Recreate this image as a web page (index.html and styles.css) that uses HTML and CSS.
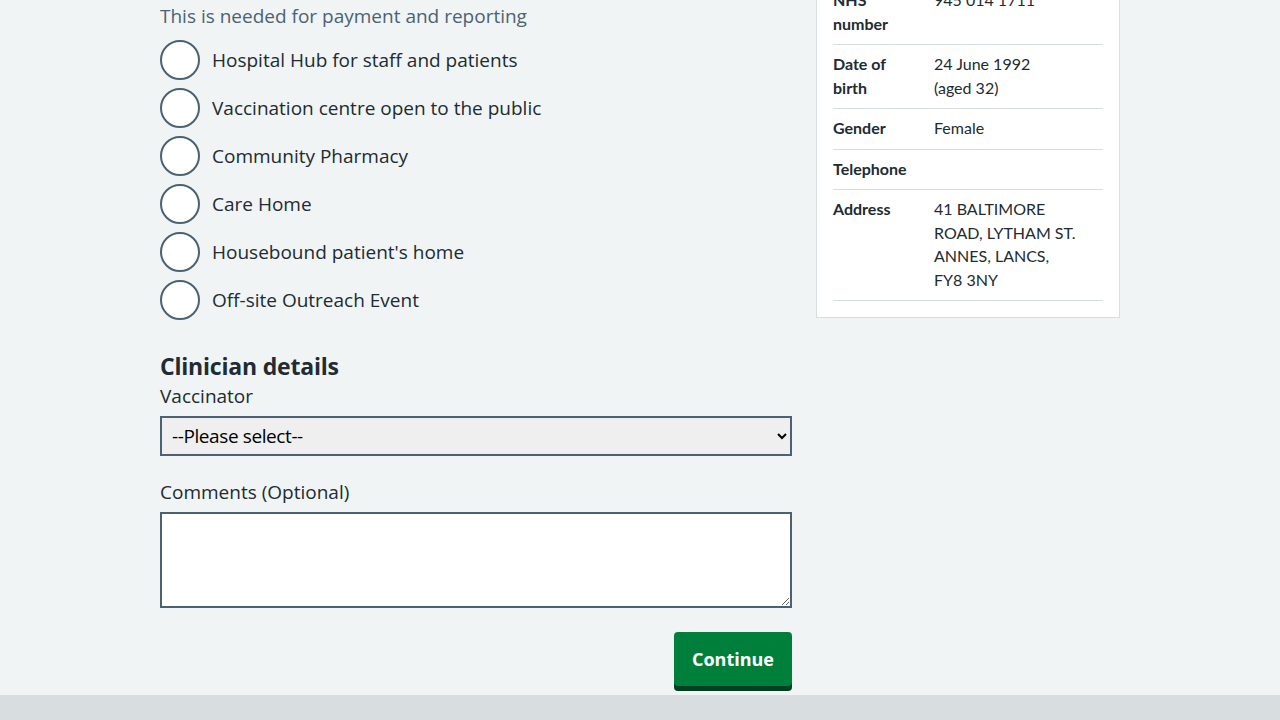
FILE: index.html
```html
<!DOCTYPE html>
<html lang="en">
<head>
<meta charset="utf-8">
<title>Record vaccination</title>
<link rel="stylesheet" href="styles.css">
</head>
<body>
<main class="container">
  <div class="layout">
    <div class="main-col">
      <p class="hint">This is needed for payment and reporting</p>
      <div class="radios">
        <label class="radio"><input type="radio" name="site"><span class="circle"></span><span class="radio-label">Hospital Hub for staff and patients</span></label>
        <label class="radio"><input type="radio" name="site"><span class="circle"></span><span class="radio-label">Vaccination centre open to the public</span></label>
        <label class="radio"><input type="radio" name="site"><span class="circle"></span><span class="radio-label">Community Pharmacy</span></label>
        <label class="radio"><input type="radio" name="site"><span class="circle"></span><span class="radio-label">Care Home</span></label>
        <label class="radio"><input type="radio" name="site"><span class="circle"></span><span class="radio-label">Housebound patient's home</span></label>
        <label class="radio"><input type="radio" name="site"><span class="circle"></span><span class="radio-label">Off-site Outreach Event</span></label>
      </div>

      <h2 class="heading">Clinician details</h2>
      <label class="field-label" for="vaccinator">Vaccinator</label>
      <select id="vaccinator" class="select">
        <option>--Please select--</option>
      </select>

      <label class="field-label comments-label" for="comments">Comments (Optional)</label>
      <textarea id="comments" class="textarea"></textarea>

      <div class="actions">
        <button class="button" type="button">Continue</button>
      </div>
    </div>

    <aside class="card">
      <dl class="summary">
        <div class="row"><dt>NHS number</dt><dd>945 014 1711</dd></div>
        <div class="row"><dt>Date of birth</dt><dd>24 June 1992<br>(aged 32)</dd></div>
        <div class="row"><dt>Gender</dt><dd>Female</dd></div>
        <div class="row"><dt>Telephone</dt><dd></dd></div>
        <div class="row"><dt>Address</dt><dd>41 BALTIMORE<br>ROAD, LYTHAM ST.<br>ANNES, LANCS,<br>FY8 3NY</dd></div>
      </dl>
    </aside>
  </div>
</main>
<footer class="footer"></footer>
</body>
</html>
```

FILE: styles.css
```css
* { box-sizing: border-box; }

html, body {
  margin: 0;
  padding: 0;
}

body {
  background: #f0f4f5;
  color: #212b32;
  font-family: "Open Sans", "Noto Sans", "Liberation Sans", sans-serif;
  font-size: 19px;
  line-height: 28px;
}

.container {
  width: 960px;
  margin: 0 auto;
  padding-bottom: 9px;
}

.layout {
  display: grid;
  grid-template-columns: 632px 304px;
  column-gap: 24px;
  align-items: start;
}

.main-col {
  display: flex;
  flex-direction: column;
}

.hint {
  margin: 2px 0 10px;
  color: #4c6272;
}

.radios {
  display: flex;
  flex-direction: column;
  gap: 8px;
}

.radio {
  display: flex;
  align-items: center;
  gap: 12px;
  cursor: pointer;
}

.radio input {
  display: none;
}

.circle {
  width: 40px;
  height: 40px;
  border: 2px solid #4c6272;
  border-radius: 50%;
  background: #fff;
  flex: none;
}

.heading {
  margin: 30px 0 0;
  font-size: 23px;
  line-height: 32px;
  font-weight: 700;
  letter-spacing: -0.2px;
}

.field-label {
  display: block;
  margin-bottom: 6px;
}

.comments-label {
  margin-top: 22px;
}

.select {
  width: 632px;
  height: 40px;
  border: 2px solid #4c6272;
  border-radius: 0;
  background: #efefef;
  color: #000;
  font-family: "Open Sans", "Noto Sans", sans-serif;
  font-size: 19px;
  padding: 0 4px 0 6px;
  letter-spacing: -0.4px;
}

.textarea {
  display: block;
  width: 632px;
  height: 96px;
  border: 2px solid #4c6272;
  border-radius: 0;
  background: #fff;
  font-family: inherit;
  font-size: 19px;
  resize: vertical;
  margin: 0;
}

.actions {
  display: flex;
  justify-content: flex-end;
  margin-top: 24px;
}

.button {
  height: 54px;
  padding: 0 18px;
  border: none;
  border-radius: 4px;
  background: #007f3b;
  box-shadow: 0 5px 0 #00401e;
  color: #fff;
  font-family: inherit;
  font-size: 18px;
  font-weight: 700;
  cursor: pointer;
}

.card {
  margin-top: -36px;
  background: #fff;
  border: 1px solid #d8dde0;
  padding: 16px;
}

.summary {
  margin: 0;
  font-family: Lato, "Noto Sans", sans-serif;
  font-size: 16px;
  line-height: 23.5px;
}

.row {
  display: grid;
  grid-template-columns: 101px 1fr;
  padding: 7px 0 9px;
  border-bottom: 1px solid #d8dde0;
}

.row dt {
  font-weight: 700;
  padding-right: 24px;
}

.row dd {
  margin: 0;
}

.footer {
  height: 40px;
  background: #d8dde0;
}
```
